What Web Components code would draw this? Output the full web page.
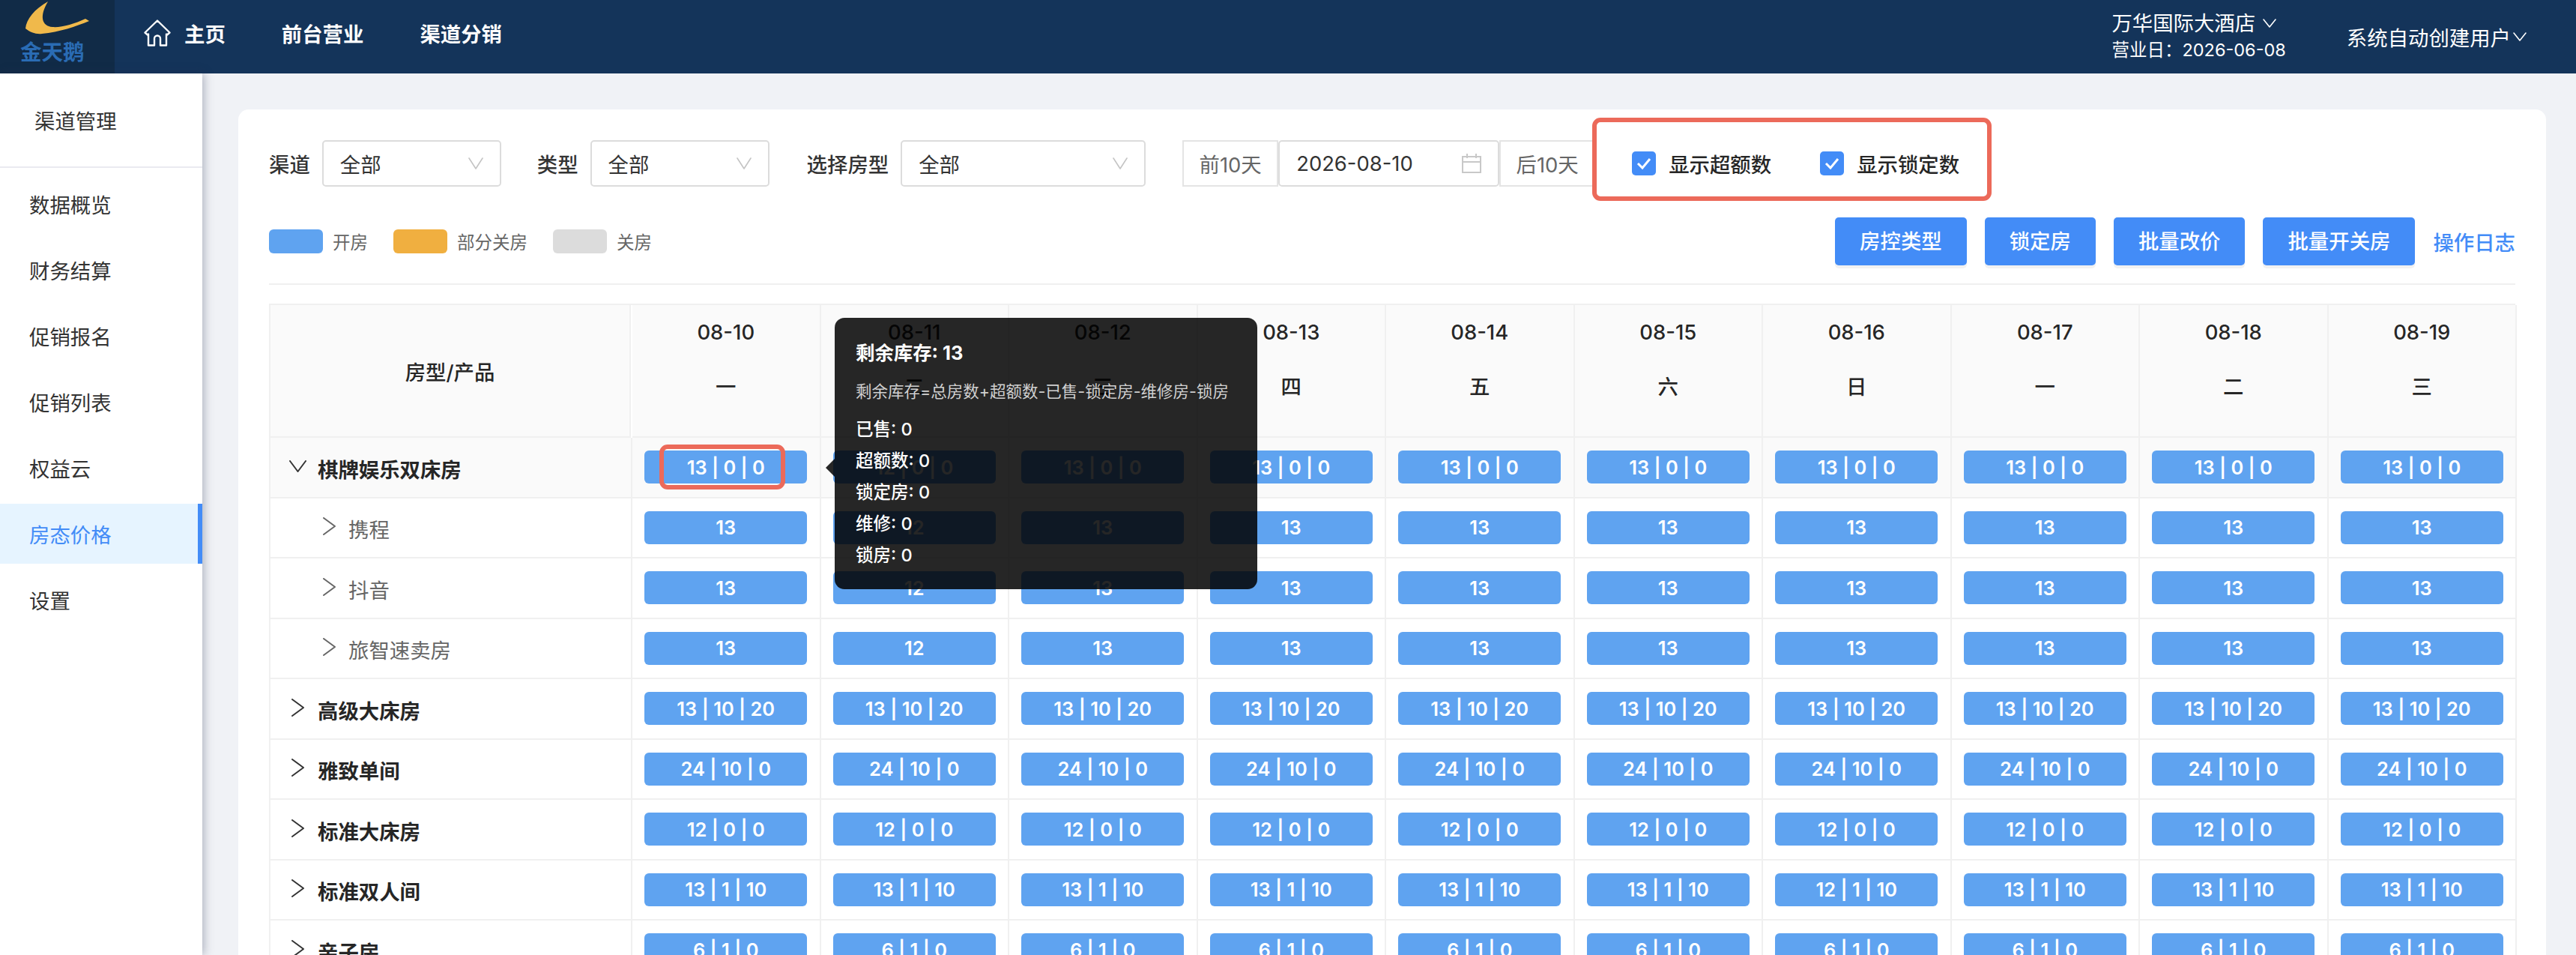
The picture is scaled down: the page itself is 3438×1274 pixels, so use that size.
<!DOCTYPE html>
<html lang="zh">
<head>
<meta charset="utf-8">
<title>房态价格</title>
<style>
  html, body { margin: 0; height: 1274px; overflow: hidden; }
  body {
    background: #f0f2f6;
    color: #262626;
    font-family: Inter, "Noto Sans CJK SC", sans-serif;
    font-size: 27.4px;
  }
  #app { display: grid; grid-template: 98px 1fr / 270px 1fr; height: 1274px; }
  app-header { grid-column: 1 / 3; }
</style>
</head>
<body>
<div id="app">
  <app-header></app-header>
  <side-nav></side-nav>
  <main-panel>
    <filter-bar></filter-bar>
    <action-bar></action-bar>
    <room-table></room-table>
    <note-box style="left:1807px;top:11px;width:533px;height:111px"></note-box>
    <note-box style="left:562px;top:447px;width:168px;height:60px"></note-box>
    <stock-tip style="left:796px;top:278px"></stock-tip>
  </main-panel>
</div>

<script>
const chevron = (d, w, h, color, sw = 2) =>
  `<svg width="${w}" height="${h}" viewBox="0 0 ${w} ${h}" fill="none" stroke="${color}" stroke-width="${sw}" stroke-linecap="round" stroke-linejoin="round"><path d="${d}"/></svg>`;

class AppHeader extends HTMLElement {
  constructor() {
    super();
    this.attachShadow({ mode: "open" }).innerHTML = `<style>
      :host { display: flex; align-items: stretch; height: 98px; background: #14345a; color: #fff; }
      .logo { width: 153px; background: #112b47; display: flex; flex-direction: column; align-items: center; position: relative; }
      .logo svg { display: block; margin-left: -8px; }
      .logo span { position: absolute; left: 27px; top: 52px; font-size: 28.5px; line-height: 36px; font-weight: 700; color: #2a6cb4; white-space: nowrap; }
      nav { display: flex; align-items: center; gap: 75px; margin-left: 39px; font-weight: 600; padding-bottom: 10px; }
      .home { display: flex; align-items: center; gap: 18px; }
      .right { margin-left: auto; display: flex; align-items: center; gap: 81px; padding-right: 66px; }
      .hotel div { display: flex; align-items: center; gap: 10px; line-height: 36px; }
      .hotel small { display: block; font-size: 23.5px; line-height: 36px; }
      .user { display: flex; align-items: center; gap: 3px; }
    </style>
    <div class="logo">
      <svg width="153" height="50" viewBox="0 0 153 50"><path fill="#f0b94b" d="M68 2C50 12 39 26 38 38C44 43 52 46 60 45C83 43 106 35 123 28L118 25C103 32 86 37 74 36C60 35 56 22 68 2Z"/></svg>
      <span>金天鹅</span>
    </div>
    <nav>
      <div class="home">
        <svg width="36" height="36" viewBox="0 0 36 36" fill="none" stroke="#fff" stroke-width="2.4" stroke-linejoin="round"><path d="M18 1.5 34.5 17.5 31 20.5 30 19.5V34.5H22V25.5A4 4 0 0 0 14 25.5V34.5H6V19.5L5 20.5 1.5 17.5Z"/></svg>
        <span>主页</span>
      </div>
      <span>前台营业</span>
      <span>渠道分销</span>
    </nav>
    <div class="right">
      <div class="hotel">
        <div>万华国际大酒店 ${chevron("M1 1 9 11 17 1", 18, 12, "#fff", 1.6)}</div>
        <small>营业日：2026-06-08</small>
      </div>
      <div class="user">系统自动创建用户${chevron("M1 1 9 11 17 1", 18, 12, "#fff", 1.6)}</div>
    </div>`;
  }
}

class SideNav extends HTMLElement {
  constructor() {
    super();
    const items = ["数据概览", "财务结算", "促销报名", "促销列表", "权益云", "房态价格", "设置"];
    this.attachShadow({ mode: "open" }).innerHTML = `<style>
      :host { display: block; background: #fff; box-shadow: 2px 0 12px rgba(40,50,80,.35); position: relative; color: #333; }
      .title { height: 126px; box-sizing: border-box; padding: 46px 0 0 46px; line-height: 36px; border-bottom: 2px solid #eaeaf0; }
      .item { height: 80px; margin: 8px 0; padding-left: 39px; display: flex; align-items: center; }
      .item.on { background: #e6f4ff; color: #438cf7; box-shadow: inset -6px 0 0 #438cf7; }
    </style>
    <div class="title">渠道管理</div>
    ${items.map((t) => `<div class="item${t === "房态价格" ? " on" : ""}">${t}</div>`).join("")}`;
  }
}

class MainPanel extends HTMLElement {
  constructor() {
    super();
    this.attachShadow({ mode: "open" }).innerHTML = `<style>
      :host { display: block; padding: 48px 40px 0 48px; overflow: hidden; }
      .card { position: relative; background: #fff; border-radius: 14px; padding: 41px 41px 0; height: 1200px; box-sizing: border-box; }
    </style>
    <div class="card"><slot></slot></div>`;
  }
}

class FilterSelect extends HTMLElement {
  constructor() {
    super();
    this.attachShadow({ mode: "open" }).innerHTML = `<style>
      :host { display: flex; align-items: center; gap: 16px; }
      label { font-weight: 500; color: #333; }
      .box { height: 62px; box-sizing: border-box; border: 2px solid #dcdcdc; border-radius: 5px; display: flex; align-items: center; justify-content: space-between; padding: 0 22px; color: #333; }
    </style>
    <label></label>
    <div class="box" part="box"><span>全部</span>${chevron("M1 1 10 15 19 1", 20, 16, "#c4c4c4", 1.6)}</div>`;
    this.shadowRoot.querySelector("label").textContent = this.getAttribute("label");
    this.shadowRoot.querySelector(".box").style.width = this.getAttribute("box") + "px";
  }
}

class CheckItem extends HTMLElement {
  constructor() {
    super();
    this.attachShadow({ mode: "open" }).innerHTML = `<style>
      :host { display: flex; align-items: center; gap: 17px; color: #262626; font-weight: 500; }
      i { width: 32px; height: 32px; border-radius: 5px; background: #438cf7; display: flex; align-items: center; justify-content: center; }
    </style>
    <i><svg width="20" height="18" viewBox="0 0 20 18" fill="none" stroke="#fff" stroke-width="3"><path d="M2 9 8 15 18 3"/></svg></i><span><slot></slot></span>`;
  }
}

class FilterBar extends HTMLElement {
  constructor() {
    super();
    this.attachShadow({ mode: "open" }).innerHTML = `<style>
      :host { display: flex; align-items: center; height: 62px; }
      .date { display: flex; height: 62px; margin-left: 49px; }
      .date div { box-sizing: border-box; border: 2px solid #e4e4e4; display: flex; align-items: center; }
      .step { width: 128px; justify-content: center; color: #666; }
      .input { width: 295px; justify-content: space-between; padding: 0 22px; color: #333; border-radius: 5px; border-color: #dcdcdc !important; }
      check-item { margin-left: 65px; }
      check-item.first { margin-left: 49px; }
    </style>
    <filter-select label="渠道" box="239"></filter-select>
    <filter-select label="类型" box="239" style="margin-left:48px"></filter-select>
    <filter-select label="选择房型" box="327" style="margin-left:50px"></filter-select>
    <div class="date">
      <div class="step">前10天</div>
      <div class="input"><span>2026-08-10</span>
        <svg width="26" height="26" viewBox="0 0 26 26" fill="none" stroke="#c8c8c8" stroke-width="2"><path d="M1 4H25V25H1ZM1 11H25M7 0V6M19 0V6"/></svg>
      </div>
      <div class="step">后10天</div>
    </div>
    <check-item class="first">显示超额数</check-item>
    <check-item>显示锁定数</check-item>`;
  }
}

class ActionBar extends HTMLElement {
  constructor() {
    super();
    const legend = [["#5fa3f0", "开房"], ["#f0af40", "部分关房"], ["#dcdcdc", "关房"]];
    const buttons = ["房控类型", "锁定房", "批量改价", "批量开关房"];
    this.attachShadow({ mode: "open" }).innerHTML = `<style>
      :host { display: flex; align-items: center; justify-content: space-between; margin-top: 41px; padding-bottom: 24px; border-bottom: 2px solid #f0f0f0; }
      .legend, .btns { display: flex; align-items: center; }
      .legend { font-size: 23.5px; color: #666; }
      .legend b { width: 72px; height: 32px; border-radius: 6px; margin-right: 13px; }
      .legend span { margin-right: 34px; }
      .btns { gap: 24px; }
      button { all: unset; height: 64px; padding: 0 33px; line-height: 64px; border-radius: 5px; background: #438cf7; color: #fff; box-shadow: 0 4px 0 rgba(0,0,0,.05); font-weight: 500; }
      a { color: #438cf7; font-weight: 500; }
    </style>
    <div class="legend">${legend.map(([c, t]) => `<b style="background:${c}"></b><span>${t}</span>`).join("")}</div>
    <div class="btns">${buttons.map((t) => `<button>${t}</button>`).join("")}<a>操作日志</a></div>`;
  }
}

class RoomChip extends HTMLElement {
  constructor() {
    super();
    this.attachShadow({ mode: "open" }).innerHTML = `<style>
      :host { display: flex; align-items: center; justify-content: center; width: 217px; height: 44px; border-radius: 6px; background: #5fa3f0; color: #fff; font-size: 25.4px; font-weight: 600; white-space: pre; }
    </style><slot></slot>`;
  }
}

const DAYS = ["一", "二", "三", "四", "五", "六", "日", "一", "二", "三"];
const ROOMS = [
  { name: "棋牌娱乐双床房", open: true, cells: (i) => (i === 1 ? "12 | 0 | 0" : "13 | 0 | 0") },
  { name: "携程", child: true, cells: (i) => (i === 1 ? "12" : "13") },
  { name: "抖音", child: true, cells: (i) => (i === 1 ? "12" : "13") },
  { name: "旅智速卖房", child: true, cells: (i) => (i === 1 ? "12" : "13") },
  { name: "高级大床房", cells: () => "13 | 10 | 20" },
  { name: "雅致单间", cells: () => "24 | 10 | 0" },
  { name: "标准大床房", cells: () => "12 | 0 | 0" },
  { name: "标准双人间", cells: (i) => (i === 6 ? "12 | 1 | 10" : "13 | 1 | 10") },
  { name: "亲子房", cells: () => "6 | 1 | 0" },
];

class RoomTable extends HTMLElement {
  constructor() {
    super();
    const head = DAYS.map((d, i) => `<div class="th day"><span>08-${10 + i}</span><span>${d}</span></div>`).join("");
    const rows = ROOMS.map((r) => {
      const icon = r.open
        ? chevron("M1 1 11.5 15 22 1", 23, 16, "#333")
        : chevron("M1 1 16 12 1 23", 17, 24, r.child ? "#666" : "#333");
      const cls = (r.open ? " hi" : "") + (r.child ? " child" : " parent");
      const cells = DAYS.map((_, i) => `<div class="td${r.open ? " hi" : ""}"><room-chip>${r.cells(i)}</room-chip></div>`).join("");
      return `<div class="td name${cls}"><i>${icon}</i><span>${r.name}</span></div>${cells}`;
    }).join("");
    this.attachShadow({ mode: "open" }).innerHTML = `<style>
      :host { display: grid; grid-template-columns: 483px repeat(10, 251.5px); grid-auto-rows: 80.5px; grid-template-rows: 177px; margin-top: 25px; border-top: 2px solid #f0f0f0; border-left: 2px solid #f0f0f0; width: 2998px; box-sizing: border-box; }
      .th, .td { box-sizing: border-box; border-right: 2px solid #f0f0f0; border-bottom: 2px solid #f0f0f0; }
      .th { background: #fafafa; display: flex; align-items: center; justify-content: center; font-weight: 500; }
      .day { flex-direction: column; justify-content: flex-start; gap: 37px; padding-top: 18px; line-height: 36px; }
      .td { display: flex; align-items: center; justify-content: center; }
      .hi { background: #fafafa; }
      .name { justify-content: flex-start; padding-top: 3px; }
      .name i { width: 24px; display: flex; justify-content: center; margin-bottom: 6px; }
      .parent { padding-left: 24px; font-weight: 600; color: #262626; }
      .parent span { margin-left: 15px; }
      .child { padding-left: 66px; color: #666; }
      .child span { margin-left: 14px; }
    </style>
    <div class="th" style="width:481px">房型/产品</div>${head}${rows}`;
  }
}

class NoteBox extends HTMLElement {
  constructor() {
    super();
    this.attachShadow({ mode: "open" }).innerHTML = `<style>
      :host { position: absolute; box-sizing: border-box; border: 6px solid #ec6a5a; border-radius: 11px; pointer-events: none; }
    </style>`;
  }
}

class StockTip extends HTMLElement {
  constructor() {
    super();
    const lines = ["已售: 0", "超额数: 0", "锁定房: 0", "维修: 0", "锁房: 0"];
    this.attachShadow({ mode: "open" }).innerHTML = `<style>
      :host { position: absolute; box-sizing: border-box; width: 564px; height: 362px; padding: 29px 28px 0; background: rgba(0,0,0,.85); border-radius: 13px; color: #fff; font-size: 23.5px; white-space: nowrap; }
      :host::before { content: ""; position: absolute; left: -12px; top: 188px; border: solid transparent; border-width: 12px 12px 12px 0; border-right-color: rgba(0,0,0,.85); }
      h4 { margin: 0; font-size: 25.4px; line-height: 36px; font-weight: 700; }
      p { margin: 15px 0 12px; font-size: 21.5px; line-height: 36px; color: #d0d0d0; }
      div { line-height: 42px; font-weight: 500; }
    </style>
    <h4>剩余库存: 13</h4>
    <p>剩余库存=总房数+超额数-已售-锁定房-维修房-锁房</p>
    ${lines.map((t) => `<div>${t}</div>`).join("")}`;
  }
}

customElements.define("app-header", AppHeader);
customElements.define("side-nav", SideNav);
customElements.define("main-panel", MainPanel);
customElements.define("filter-select", FilterSelect);
customElements.define("check-item", CheckItem);
customElements.define("filter-bar", FilterBar);
customElements.define("action-bar", ActionBar);
customElements.define("room-chip", RoomChip);
customElements.define("room-table", RoomTable);
customElements.define("note-box", NoteBox);
customElements.define("stock-tip", StockTip);
</script>
</body>
</html>
